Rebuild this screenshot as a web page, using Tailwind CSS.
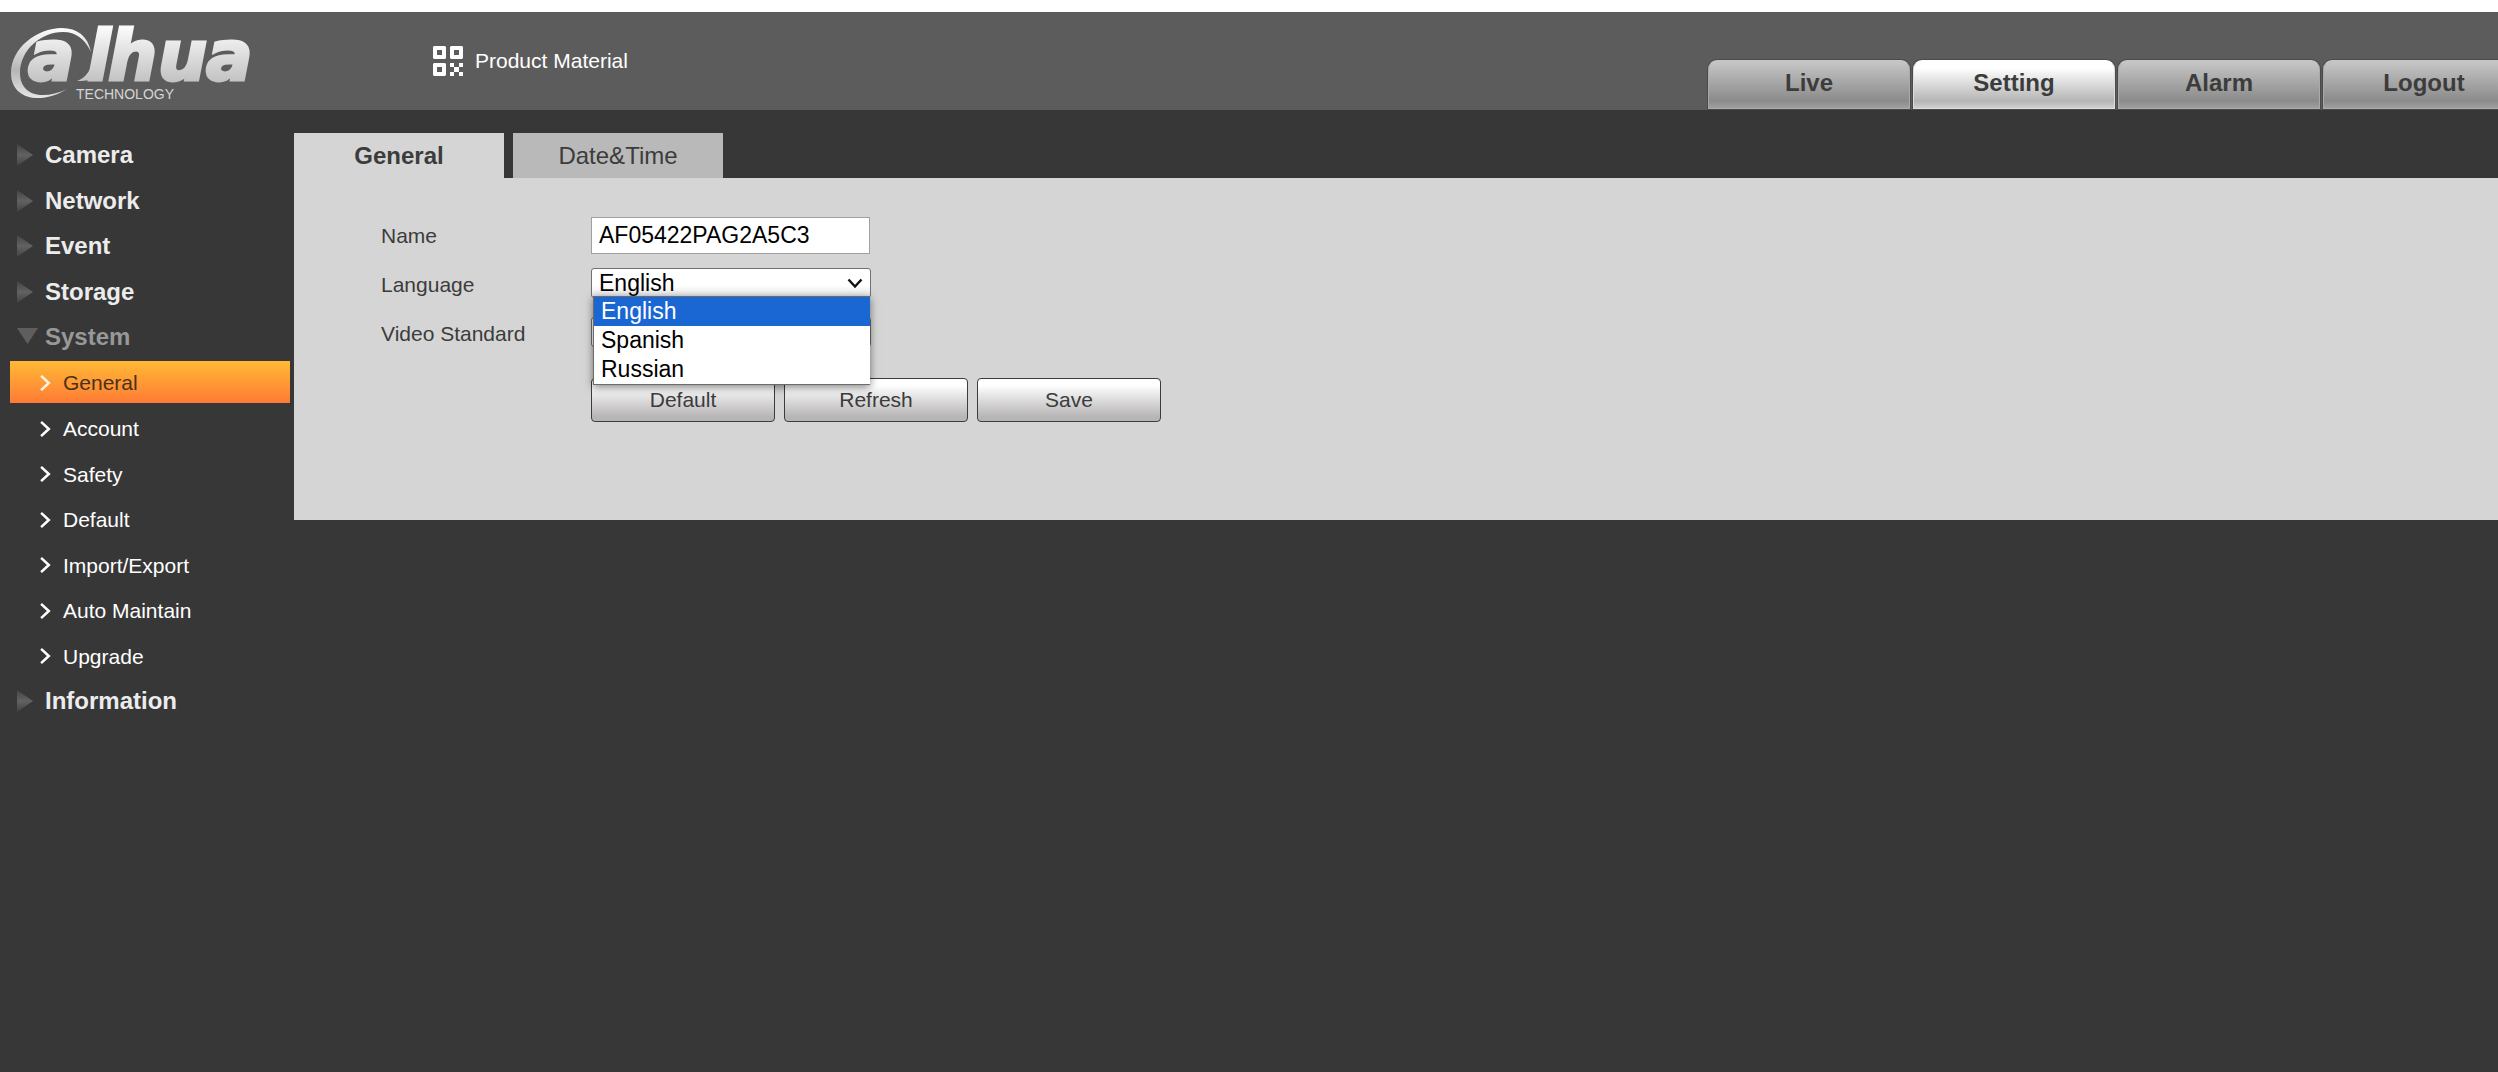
<!DOCTYPE html>
<html lang="en">

<head>
  <meta charset="UTF-8" />
  <meta name="viewport" content="width=device-width, initial-scale=1.0" />
  <title>Setting - General</title>
  <script src="https://cdn.jsdelivr.net/npm/@tailwindcss/browser@4"></script>
</head>

<body class="min-h-screen bg-[#373737] font-['Liberation_Sans',Arial,sans-serif] text-[21px] text-[#3c3c3c]">
  <!-- Shared icons -->
  <svg class="hidden">
    <symbol id="chevron" viewBox="0 0 12 18">
      <path d="M1.2 1.2 9.6 9l-8.4 7.8" fill="none" stroke="currentColor" stroke-width="2.8" />
    </symbol>
  </svg>

  <!-- Header -->
  <header class="flex h-[110px] overflow-hidden border-t-12 border-white bg-[#5c5c5c]">
    <svg class="h-[98px] w-[270px] shrink-0" viewBox="0 12 270 98" role="img" aria-label="alhua Technology">
      <defs>
        <linearGradient id="silver" gradientUnits="userSpaceOnUse" x1="0" y1="28" x2="0" y2="82">
          <stop offset="0" stop-color="#fafafa" />
          <stop offset="1" stop-color="#c2c2c2" />
        </linearGradient>
        <linearGradient id="ring" x1="0" y1="0" x2="0" y2="1">
          <stop offset="0" stop-color="#ffffff" />
          <stop offset=".6" stop-color="#b5b5b5" />
          <stop offset="1" stop-color="#e6e6e6" />
        </linearGradient>
      </defs>
      <path d="M67 89C42 105 11 100 11 73 11 48 37 28 62 28c15 0 26 8 29 24-6-13-15-20-28-20-22 0-43 18-43 41 0 22 22 28 47 16Z" fill="url(#ring)" />
      <path d="M77 81c8-3 13-9 17-22l8 12c-4 8-12 10-25 10Z" fill="url(#silver)" />
      <text class="font-['DejaVu_Sans',sans-serif] text-[69px] font-bold italic" x="28 87 108 158 206" y="80" fill="url(#silver)" stroke="url(#silver)" stroke-width="3">alhua</text>
      <text class="text-[14px]" x="76" y="99" fill="#d5d5d5">TECHNOLOGY</text>
    </svg>

    <a href="#" class="ml-[163px] flex h-[98px] items-center gap-3 text-white">
      <svg class="size-[30px]" viewBox="0 0 30 30" fill="#fff">
        <path fill-rule="evenodd" d="M1 0h11l1 1v11l-1 1H1l-1-1V1ZM4 4v5h5V4ZM18 0h11l1 1v11l-1 1H18l-1-1V1ZM21 4v5h5V4ZM1 17h11l1 1v11l-1 1H1l-1-1V18ZM4 21v5h5v-5Z" />
        <path d="M17 17h4v4h-4ZM26 17h4v4h-4ZM21 21h5v5h-5ZM17 26h4v4h-4ZM26 26h4v4h-4Z" />
      </svg>
      Product Material
    </a>

    <nav class="-mr-[27px] ml-auto flex items-end gap-[3px] pb-px text-2xl font-bold">
      <a href="#" class="flex h-[49px] w-[202px] items-center justify-center rounded-t-[9px] border border-[#aaaaaa] border-t-[#c8c8c8] bg-linear-to-b from-[#c4c4c4] from-5% via-[#8b8b8b] via-85% to-[#a0a0a0] pb-[3px] shadow-[0_0_0_1px_#4a4a4a]">Live</a>
      <a href="#" class="flex h-[49px] w-[202px] items-center justify-center rounded-t-[9px] border border-[#dedede] border-t-white bg-linear-to-b from-white from-15% via-[#b5b5b5] via-85% to-[#d0d0d0] pb-[3px] shadow-[0_0_0_1px_#4a4a4a]">Setting</a>
      <a href="#" class="flex h-[49px] w-[202px] items-center justify-center rounded-t-[9px] border border-[#aaaaaa] border-t-[#c8c8c8] bg-linear-to-b from-[#c4c4c4] from-5% via-[#8b8b8b] via-85% to-[#a0a0a0] pb-[3px] shadow-[0_0_0_1px_#4a4a4a]">Alarm</a>
      <a href="#" class="flex h-[49px] w-[202px] items-center justify-center rounded-t-[9px] border border-[#aaaaaa] border-t-[#c8c8c8] bg-linear-to-b from-[#c4c4c4] from-5% via-[#8b8b8b] via-85% to-[#a0a0a0] pb-[3px] shadow-[0_0_0_1px_#4a4a4a]">Logout</a>
    </nav>
  </header>

  <div class="flex items-start pt-[23px]">
    <!-- Sidebar -->
    <nav class="w-[294px] shrink-0 pr-1 pl-[10px]">
      <svg class="absolute size-0">
        <defs>
          <linearGradient id="tri" x1="0" y1="0" x2="0" y2="1">
            <stop offset="0" stop-color="#444444" />
            <stop offset=".5" stop-color="#626262" />
            <stop offset="1" stop-color="#424242" />
          </linearGradient>
        </defs>
      </svg>
      <ul class="grid h-[592px] auto-rows-fr text-white">
        <li><a href="#" class="flex h-11 items-center gap-[6px] pl-[7px] text-2xl font-bold text-[#ececec]"><svg class="size-[22px]" viewBox="0 0 22 22"><path d="M0 0l16 11L0 22Z" fill="url(#tri)" /></svg>Camera</a></li>
        <li><a href="#" class="flex h-11 items-center gap-[6px] pl-[7px] text-2xl font-bold text-[#ececec]"><svg class="size-[22px]" viewBox="0 0 22 22"><path d="M0 0l16 11L0 22Z" fill="url(#tri)" /></svg>Network</a></li>
        <li><a href="#" class="flex h-11 items-center gap-[6px] pl-[7px] text-2xl font-bold text-[#ececec]"><svg class="size-[22px]" viewBox="0 0 22 22"><path d="M0 0l16 11L0 22Z" fill="url(#tri)" /></svg>Event</a></li>
        <li><a href="#" class="flex h-11 items-center gap-[6px] pl-[7px] text-2xl font-bold text-[#ececec]"><svg class="size-[22px]" viewBox="0 0 22 22"><path d="M0 0l16 11L0 22Z" fill="url(#tri)" /></svg>Storage</a></li>
        <li><a href="#" class="flex h-11 items-center gap-[6px] pl-[7px] text-2xl font-bold text-[#989898]"><svg class="size-[22px]" viewBox="0 0 22 22"><path d="M0 2h21L10.500 18Z" fill="#5e5e5c" /></svg>System</a></li>
        <li><a href="#" class="flex h-[42px] items-center gap-3 bg-linear-to-b from-[#ffb935] to-[#ff7a35] pt-[3px] pl-[30px] text-[#4a3218]"><svg class="h-[18px] w-[11px] text-[#fff3e0]"><use href="#chevron" /></svg>General</a></li>
        <li><a href="#" class="flex h-[42px] items-center gap-3 pt-[3px] pl-[30px]"><svg class="h-[18px] w-[11px]"><use href="#chevron" /></svg>Account</a></li>
        <li><a href="#" class="flex h-[42px] items-center gap-3 pt-[3px] pl-[30px]"><svg class="h-[18px] w-[11px]"><use href="#chevron" /></svg>Safety</a></li>
        <li><a href="#" class="flex h-[42px] items-center gap-3 pt-[3px] pl-[30px]"><svg class="h-[18px] w-[11px]"><use href="#chevron" /></svg>Default</a></li>
        <li><a href="#" class="flex h-[42px] items-center gap-3 pt-[3px] pl-[30px]"><svg class="h-[18px] w-[11px]"><use href="#chevron" /></svg>Import/Export</a></li>
        <li><a href="#" class="flex h-[42px] items-center gap-3 pt-[3px] pl-[30px]"><svg class="h-[18px] w-[11px]"><use href="#chevron" /></svg>Auto Maintain</a></li>
        <li><a href="#" class="flex h-[42px] items-center gap-3 pt-[3px] pl-[30px]"><svg class="h-[18px] w-[11px]"><use href="#chevron" /></svg>Upgrade</a></li>
        <li><a href="#" class="flex h-11 items-center gap-[6px] pl-[7px] text-2xl font-bold text-[#ececec]"><svg class="size-[22px]" viewBox="0 0 22 22"><path d="M0 0l16 11L0 22Z" fill="url(#tri)" /></svg>Information</a></li>
      </ul>
    </nav>

    <main class="grow">
      <!-- Page tabs -->
      <div class="flex gap-[9px] text-2xl">
        <button type="button" class="h-[45px] w-[210px] bg-[#d5d5d5] font-bold">General</button>
        <button type="button" class="h-[45px] w-[210px] bg-[#b9b9b9]">Date&amp;Time</button>
      </div>

      <!-- General settings -->
      <form class="bg-[#d5d5d5] pt-[33px] pb-[98px] pl-[87px]">
        <div class="flex h-[49px] items-center">
          <label for="name" class="w-[210px]">Name</label>
          <input id="name" type="text" value="AF05422PAG2A5C3" class="h-[37px] w-[279px] border border-[#a0a0a0] bg-white px-[7px] text-[23px] text-black" />
        </div>
        <div class="flex h-[49px] items-center">
          <label for="language" class="w-[210px]">Language</label>
          <div class="relative mb-1">
            <select id="language" class="block h-[30px] w-[280px] appearance-none rounded-[3px] border border-[#707070] bg-linear-to-b from-white from-60% to-[#e6e6e6] px-[7px] text-[23px] leading-7 text-black">
              <option>English</option>
              <option>Spanish</option>
              <option>Russian</option>
            </select>
            <svg class="pointer-events-none absolute top-[10px] right-2 h-[11px] w-4" viewBox="0 0 16 11"><path d="M1.500 1.500 8 8.500l6.500-7" fill="none" stroke="#111" stroke-width="2.400" /></svg>
            <!-- Open option list -->
            <ul class="absolute top-7 left-[2px] z-10 w-[277px] border-y border-l border-[#6b6b6b] bg-white text-[23px] leading-[29px] text-black shadow-[0_2px_8px_rgba(0,0,0,0.5)]">
              <li class="bg-[#1a66d2] px-[7px] text-white">English</li>
              <li class="px-[7px]">Spanish</li>
              <li class="px-[7px]">Russian</li>
            </ul>
          </div>
        </div>
        <div class="flex h-[49px] items-center">
          <label for="standard" class="w-[210px]">Video Standard</label>
          <select id="standard" class="mb-1 block h-[30px] w-[280px] appearance-none rounded-[3px] border border-[#707070] bg-white px-[7px] text-[23px] leading-7 text-black"></select>
        </div>
        <div class="mt-5 ml-[210px] flex gap-[9px]">
          <button type="button" class="h-[44px] w-[184px] rounded-[4px] border border-[#3c3c3c] bg-linear-to-b from-white from-15% to-[#b7b5b5] to-90%">Default</button>
          <button type="button" class="h-[44px] w-[184px] rounded-[4px] border border-[#3c3c3c] bg-linear-to-b from-white from-15% to-[#b7b5b5] to-90%">Refresh</button>
          <button type="button" class="h-[44px] w-[184px] rounded-[4px] border border-[#3c3c3c] bg-linear-to-b from-white from-15% to-[#b7b5b5] to-90%">Save</button>
        </div>
      </form>
    </main>
  </div>
</body>

</html>
